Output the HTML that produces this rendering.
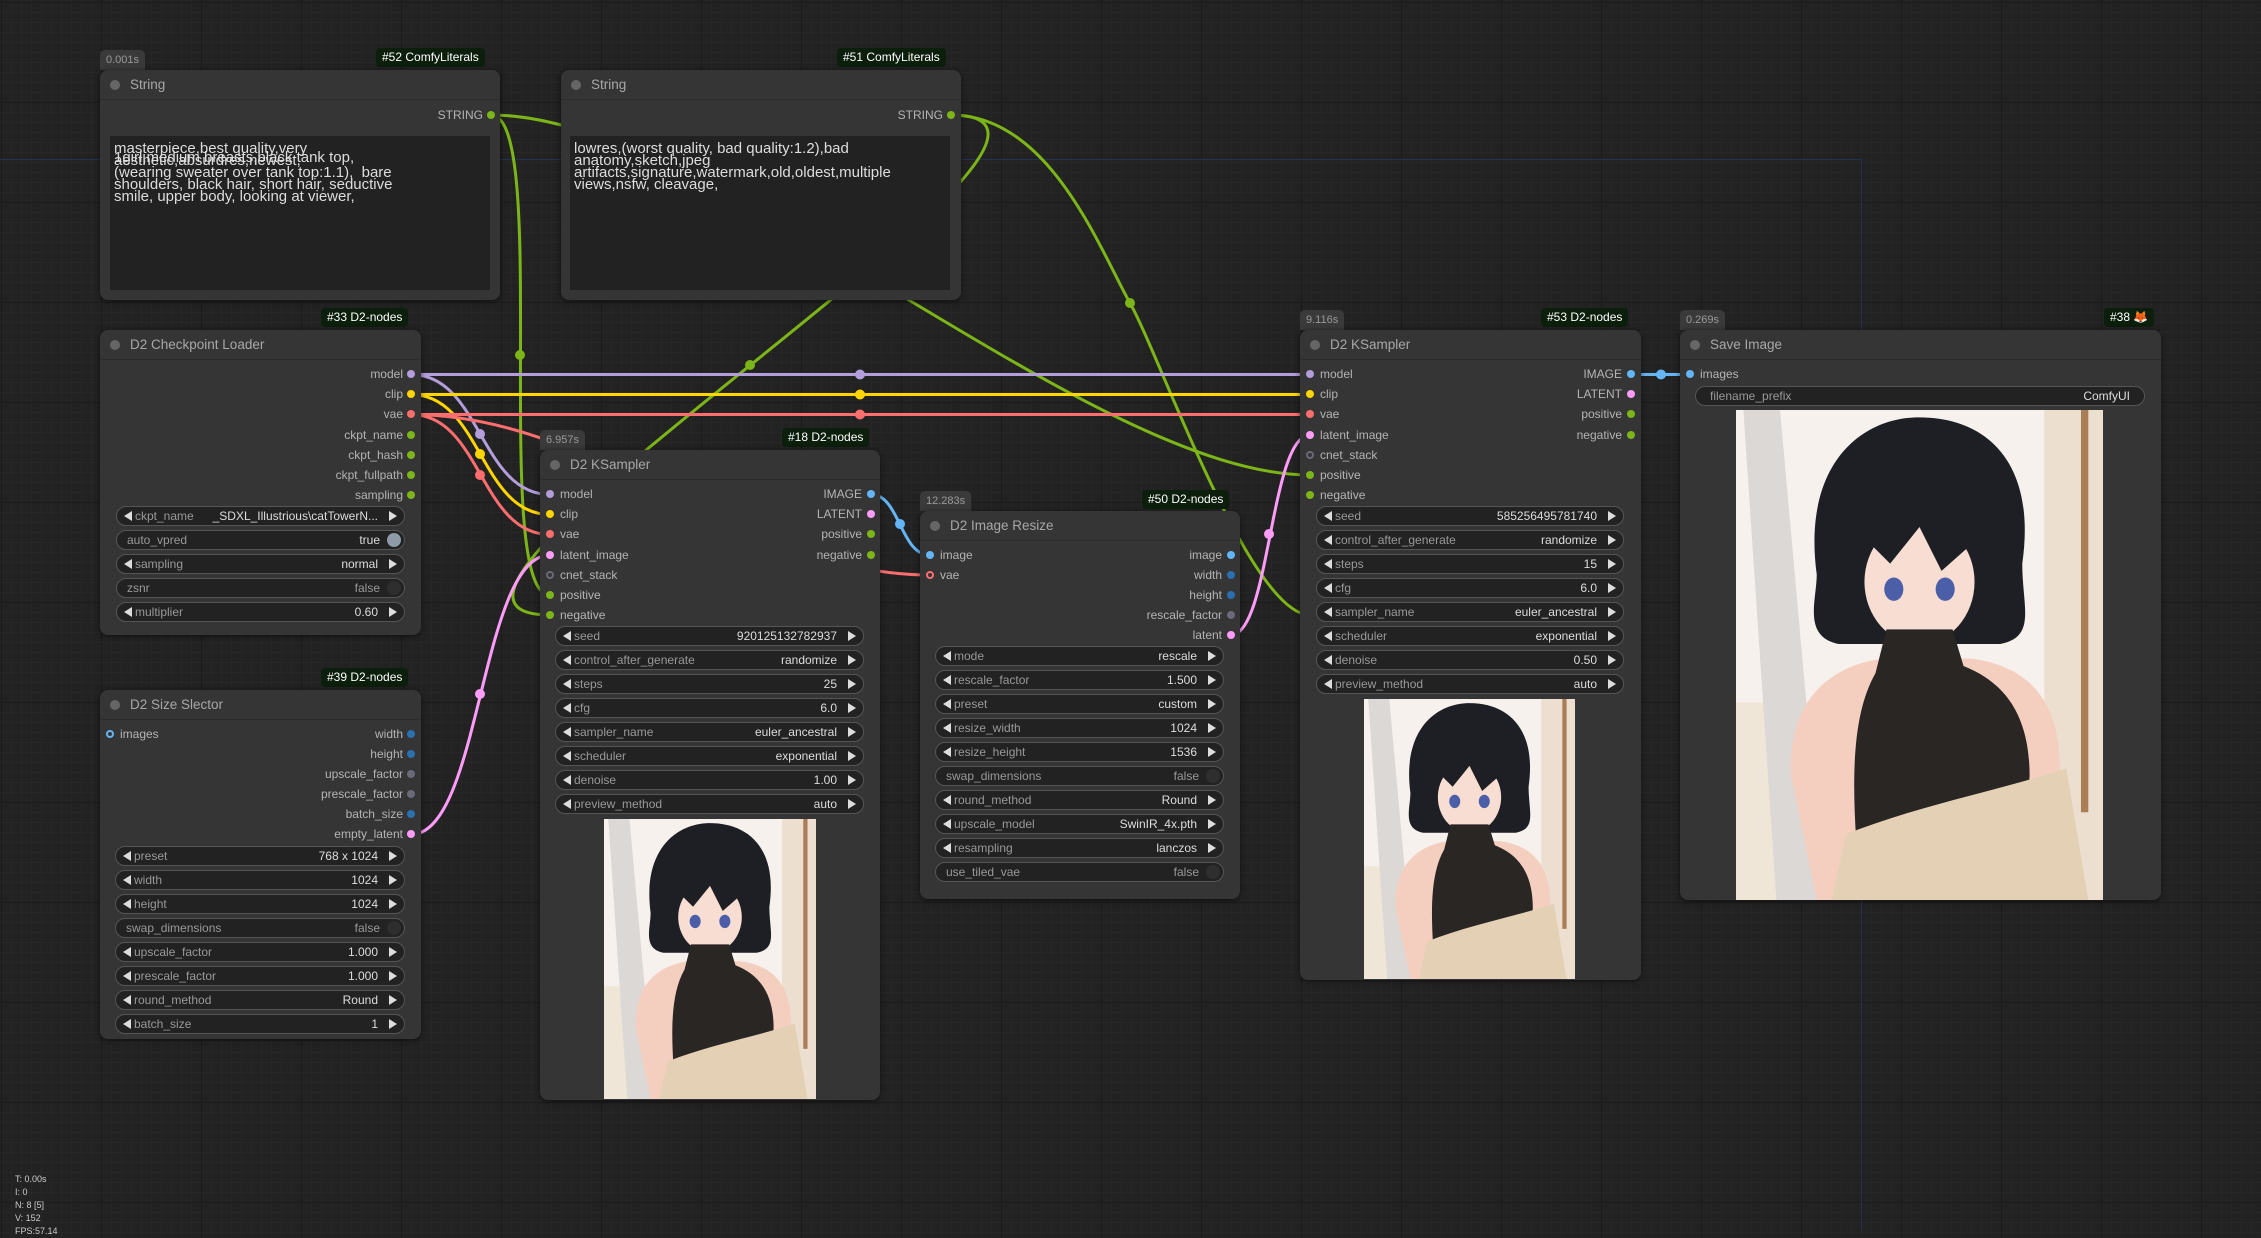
<!DOCTYPE html>
<html><head><meta charset="utf-8"><style>
*{box-sizing:border-box;margin:0;padding:0}
body{width:2261px;height:1230px;overflow:hidden;position:relative;font-family:"Liberation Sans",sans-serif;
background-color:#222;
background-image:linear-gradient(#1b1b1b 1px,transparent 1px),linear-gradient(90deg,#1b1b1b 1px,transparent 1px),linear-gradient(#272727 1px,transparent 1px),linear-gradient(90deg,#272727 1px,transparent 1px);
background-size:100px 100px,100px 100px,10px 10px,10px 10px;background-position:1px 2px,1px 2px,1px 2px,1px 2px}
.n{position:absolute;background:#353535;border-radius:8px;box-shadow:0 1px 6px rgba(0,0,0,.6)}
.t{height:30px;border-bottom:1px solid #2c2c2c;color:#a8a8a8;font-size:13.5px;line-height:30px;padding-left:30px;position:relative}
.t::before{content:"";position:absolute;left:10px;top:10px;width:10px;height:10px;border-radius:50%;background:#666}
.d{position:absolute;width:8px;height:8px;border-radius:50%}
.h{position:absolute;width:8px;height:8px;border-radius:50%;border:2px solid}
.l{position:absolute;font-size:12px;line-height:14px;color:#b4b4b4;white-space:nowrap}
.w{position:absolute;height:20px;border:1px solid #555;background:#222;border-radius:10px;font-size:12px;line-height:18px;color:#999;white-space:nowrap}
.w .k{position:absolute;left:18px}
.w b{position:absolute;right:26px;font-weight:normal;color:#ddd}
.w .la{position:absolute;left:7px;top:4px;width:0;height:0;border-top:5px solid transparent;border-bottom:5px solid transparent;border-right:8px solid #ddd}
.w .ra{position:absolute;right:7px;top:4px;width:0;height:0;border-top:5px solid transparent;border-bottom:5px solid transparent;border-left:8px solid #ddd}
.w.tg .k{left:10px}
.w.tg b{right:24px;color:#999}
.w .kn{position:absolute;right:3px;top:2px;width:14px;height:14px;border-radius:50%;background:#2e2e2e}
.lb{position:absolute;height:19px;background:#0c1e0c;color:#fff;font-size:12px;line-height:19px;padding:0 6px;border-radius:4px;white-space:nowrap}
.bd{position:absolute;height:20px;background:#3a3a3a;color:#999;font-size:11px;line-height:20px;padding:0 6px;border-radius:5px 5px 0 0}
.ta{position:absolute;background:#222;color:#ddd;font-size:15px;line-height:12px;padding:7px 4px;overflow:hidden;white-space:nowrap}
.st{position:absolute;left:15px;color:#ccc;font-size:9px;line-height:13px}
svg.img{position:absolute}
</style></head><body>

<div style="position:absolute;left:0;top:159px;width:1862px;height:1px;background:#243252"></div>
<div style="position:absolute;left:1861px;top:159px;width:1px;height:1071px;background:#243252"></div>

<svg width="0" height="0" style="position:absolute">
<defs>
<symbol id="girl" viewBox="0 0 100 134" preserveAspectRatio="none">
<rect width="100" height="134" fill="#f6f1ec"/>
<rect x="0" y="80" width="40" height="54" fill="#f0e6d8"/>
<polygon points="2,0 12,0 24,134 11,134" fill="#dcd8d5"/>
<rect x="84" y="0" width="16" height="134" fill="#ecdfcf"/>
<rect x="94" y="0" width="2" height="110" fill="#a97d55"/>
<path d="M22,45 C18,15 34,2 50,2 C68,2 82,14 78,42 C78,54 82,62 72,64 L28,64 C18,62 22,52 22,45Z" fill="#1d1f24"/>
<ellipse cx="50" cy="47" rx="15" ry="17" fill="#f7ddd2"/>
<path d="M30,42 C30,22 40,14 52,14 C66,14 71,24 71,42 L65,36 L56,44 L50,32 L42,42 L36,36Z" fill="#1d1f24"/>
<ellipse cx="43" cy="49" rx="2.6" ry="3.2" fill="#4a5fa8"/>
<ellipse cx="57" cy="49" rx="2.6" ry="3.2" fill="#4a5fa8"/>
<path d="M15,100 C14,80 25,70 40,68 L64,68 C80,70 90,80 88,104 L84,134 L22,134Z" fill="#f4cfbf"/>
<path d="M41,60 L59,60 L62,70 C72,74 80,82 80,100 L78,134 L34,134 C32,110 30,86 38,72Z" fill="#2a2624"/>
<path d="M30,116 C50,108 72,104 90,98 L96,134 L26,134Z" fill="#e4d1b5"/>
</symbol>
</defs>
</svg>

<svg width="2261" height="1230" style="position:absolute;left:0;top:0" fill="none" stroke-width="3">
<g stroke="#7cb518">
<path d="M491,115 C551,115 490,595 550,595"/>
<path d="M491,115 C711,115 1090,475 1310,475"/>
<path d="M951,115 C1171,115 330,615 550,615"/>
<path d="M951,115 C1050,115 1100,250 1130,303 S1250,615 1310,615"/>
</g>
<path stroke="#b39ddb" d="M411,374.5 L1310,374.5 M411,374.5 C481,374.5 480,494.5 550,494.5"/>
<path stroke="#ffd500" d="M411,394.5 L1310,394.5 M411,394.5 C481,394.5 480,514.5 550,514.5"/>
<path stroke="#ff6e6e" d="M411,414.5 L1310,414.5 M411,414.5 C481,414.5 480,534.5 550,534.5 M411,414.5 C600,414.5 740,575 930,575"/>
<path stroke="#64b5f6" d="M871,494.5 C900,494.5 900,555 930,555 M1631,374.5 L1690,374.5"/>
<path stroke="#ff9cf9" d="M1231,635 C1270,635 1270,435 1310,435 M411,834.5 C481,834.5 480,555 550,555"/>
<g>
<circle cx="520" cy="355" r="5" fill="#7cb518"/><circle cx="750" cy="365" r="5" fill="#7cb518"/><circle cx="1130" cy="303" r="5" fill="#7cb518"/>
<circle cx="860" cy="374.5" r="5" fill="#b39ddb"/><circle cx="480" cy="434" r="5" fill="#b39ddb"/>
<circle cx="860" cy="394.5" r="5" fill="#ffd500"/><circle cx="480" cy="454" r="5" fill="#ffd500"/>
<circle cx="860" cy="414.5" r="5" fill="#ff6e6e"/><circle cx="480" cy="475" r="5" fill="#ff6e6e"/>
<circle cx="900" cy="524" r="5" fill="#64b5f6"/><circle cx="1661" cy="374.5" r="5" fill="#64b5f6"/>
<circle cx="1269" cy="534" r="5" fill="#ff9cf9"/><circle cx="480" cy="694" r="5" fill="#ff9cf9"/>
</g>
</svg>

<div class="bd" style="left:100px;top:50px">0.001s</div>
<div class="lb" style="left:376px;top:48px">#52 ComfyLiterals</div>
<div class="n" style="left:100px;top:70px;width:400px;height:230px"><div class="t">String</div></div>
<div class="l" style="right:1778px;top:108px">STRING</div><div class="d" style="left:487px;top:111px;background:#7cb518"></div>
<div class="ta" style="left:110px;top:136px;width:380px;height:154px">masterpiece,best quality,very<br><span style="position:relative">aesthetic,absurdres,newest,<span style="position:absolute;left:0;top:0">1girl,medium breasts,black tank top,</span></span><br>(wearing sweater over tank top:1.1),&nbsp; bare<br>shoulders, black hair, short hair, seductive<br>smile, upper body, looking at viewer,</div>

<div class="lb" style="left:837px;top:48px">#51 ComfyLiterals</div>
<div class="n" style="left:561px;top:70px;width:400px;height:230px"><div class="t">String</div></div>
<div class="l" style="right:1318px;top:108px">STRING</div><div class="d" style="left:947px;top:111px;background:#7cb518"></div>
<div class="ta" style="left:570px;top:136px;width:380px;height:154px">lowres,(worst quality, bad quality:1.2),bad<br>anatomy,sketch,jpeg<br>artifacts,signature,watermark,old,oldest,multiple<br>views,nsfw, cleavage,</div>

<div class="lb" style="left:321px;top:308px">#33 D2-nodes</div>
<div class="n" style="left:100px;top:330px;width:321px;height:305px"><div class="t">D2 Checkpoint Loader</div></div>
<div class="l" style="right:1858px;top:367px">model</div><div class="d" style="left:407px;top:370px;background:#b39ddb"></div>
<div class="l" style="right:1858px;top:387px">clip</div><div class="d" style="left:407px;top:390px;background:#ffd500"></div>
<div class="l" style="right:1858px;top:407px">vae</div><div class="d" style="left:407px;top:410px;background:#ff6e6e"></div>
<div class="l" style="right:1858px;top:428px">ckpt_name</div><div class="d" style="left:407px;top:431px;background:#7cb518"></div>
<div class="l" style="right:1858px;top:448px">ckpt_hash</div><div class="d" style="left:407px;top:451px;background:#7cb518"></div>
<div class="l" style="right:1858px;top:468px">ckpt_fullpath</div><div class="d" style="left:407px;top:471px;background:#7cb518"></div>
<div class="l" style="right:1858px;top:488px">sampling</div><div class="d" style="left:407px;top:491px;background:#7cb518"></div>
<div class="w" style="left:116px;top:506px;width:289px"><i class="la"></i><span class="k">ckpt_name</span><b>_SDXL_Illustrious\catTowerN...</b><i class="ra"></i></div>
<div class="w tg" style="left:116px;top:530px;width:289px"><span class="k">auto_vpred</span><b style="color:#ddd">true</b><i class="kn" style="background:#8e9aa6"></i></div>
<div class="w" style="left:116px;top:554px;width:289px"><i class="la"></i><span class="k">sampling</span><b>normal</b><i class="ra"></i></div>
<div class="w tg" style="left:116px;top:578px;width:289px"><span class="k">zsnr</span><b>false</b><i class="kn"></i></div>
<div class="w" style="left:116px;top:602px;width:289px"><i class="la"></i><span class="k">multiplier</span><b>0.60</b><i class="ra"></i></div>

<div class="lb" style="left:321px;top:668px">#39 D2-nodes</div>
<div class="n" style="left:100px;top:690px;width:321px;height:349px"><div class="t">D2 Size Slector</div></div>
<div class="h" style="left:106px;top:730px;border-color:#64b5f6"></div><div class="l" style="left:120px;top:727px">images</div>
<div class="l" style="right:1858px;top:727px">width</div><div class="d" style="left:407px;top:730px;background:#2a6fb0"></div>
<div class="l" style="right:1858px;top:747px">height</div><div class="d" style="left:407px;top:750px;background:#2a6fb0"></div>
<div class="l" style="right:1858px;top:767px">upscale_factor</div><div class="d" style="left:407px;top:770px;background:#6a6a78"></div>
<div class="l" style="right:1858px;top:787px">prescale_factor</div><div class="d" style="left:407px;top:790px;background:#6a6a78"></div>
<div class="l" style="right:1858px;top:807px">batch_size</div><div class="d" style="left:407px;top:810px;background:#2a6fb0"></div>
<div class="l" style="right:1858px;top:827px">empty_latent</div><div class="d" style="left:407px;top:830px;background:#ff9cf9"></div>
<div class="w" style="left:115px;top:846px;width:290px"><i class="la"></i><span class="k">preset</span><b>768 x 1024</b><i class="ra"></i></div>
<div class="w" style="left:115px;top:870px;width:290px"><i class="la"></i><span class="k">width</span><b>1024</b><i class="ra"></i></div>
<div class="w" style="left:115px;top:894px;width:290px"><i class="la"></i><span class="k">height</span><b>1024</b><i class="ra"></i></div>
<div class="w tg" style="left:115px;top:918px;width:290px"><span class="k">swap_dimensions</span><b>false</b><i class="kn"></i></div>
<div class="w" style="left:115px;top:942px;width:290px"><i class="la"></i><span class="k">upscale_factor</span><b>1.000</b><i class="ra"></i></div>
<div class="w" style="left:115px;top:966px;width:290px"><i class="la"></i><span class="k">prescale_factor</span><b>1.000</b><i class="ra"></i></div>
<div class="w" style="left:115px;top:990px;width:290px"><i class="la"></i><span class="k">round_method</span><b>Round</b><i class="ra"></i></div>
<div class="w" style="left:115px;top:1014px;width:290px"><i class="la"></i><span class="k">batch_size</span><b>1</b><i class="ra"></i></div>

<div class="bd" style="left:540px;top:430px">6.957s</div>
<div class="lb" style="left:782px;top:428px">#18 D2-nodes</div>
<div class="n" style="left:540px;top:450px;width:340px;height:650px"><div class="t">D2 KSampler</div></div>
<div class="d" style="left:546px;top:490px;background:#b39ddb"></div><div class="l" style="left:560px;top:487px">model</div>
<div class="d" style="left:546px;top:510px;background:#ffd500"></div><div class="l" style="left:560px;top:507px">clip</div>
<div class="d" style="left:546px;top:530px;background:#ff6e6e"></div><div class="l" style="left:560px;top:527px">vae</div>
<div class="d" style="left:546px;top:551px;background:#ff9cf9"></div><div class="l" style="left:560px;top:548px">latent_image</div>
<div class="h" style="left:546px;top:571px;border-color:#6a6a78"></div><div class="l" style="left:560px;top:568px">cnet_stack</div>
<div class="d" style="left:546px;top:591px;background:#7cb518"></div><div class="l" style="left:560px;top:588px">positive</div>
<div class="d" style="left:546px;top:611px;background:#7cb518"></div><div class="l" style="left:560px;top:608px">negative</div>
<div class="l" style="right:1399px;top:487px">IMAGE</div><div class="d" style="left:867px;top:490px;background:#64b5f6"></div>
<div class="l" style="right:1399px;top:507px">LATENT</div><div class="d" style="left:867px;top:510px;background:#ff9cf9"></div>
<div class="l" style="right:1399px;top:527px">positive</div><div class="d" style="left:867px;top:530px;background:#7cb518"></div>
<div class="l" style="right:1399px;top:548px">negative</div><div class="d" style="left:867px;top:551px;background:#7cb518"></div>
<div class="w" style="left:555px;top:626px;width:309px"><i class="la"></i><span class="k">seed</span><b>920125132782937</b><i class="ra"></i></div>
<div class="w" style="left:555px;top:650px;width:309px"><i class="la"></i><span class="k">control_after_generate</span><b>randomize</b><i class="ra"></i></div>
<div class="w" style="left:555px;top:674px;width:309px"><i class="la"></i><span class="k">steps</span><b>25</b><i class="ra"></i></div>
<div class="w" style="left:555px;top:698px;width:309px"><i class="la"></i><span class="k">cfg</span><b>6.0</b><i class="ra"></i></div>
<div class="w" style="left:555px;top:722px;width:309px"><i class="la"></i><span class="k">sampler_name</span><b>euler_ancestral</b><i class="ra"></i></div>
<div class="w" style="left:555px;top:746px;width:309px"><i class="la"></i><span class="k">scheduler</span><b>exponential</b><i class="ra"></i></div>
<div class="w" style="left:555px;top:770px;width:309px"><i class="la"></i><span class="k">denoise</span><b>1.00</b><i class="ra"></i></div>
<div class="w" style="left:555px;top:794px;width:309px"><i class="la"></i><span class="k">preview_method</span><b>auto</b><i class="ra"></i></div>
<svg class="img" style="left:604px;top:819px" width="212" height="280"><use href="#girl" width="212" height="280"/></svg>

<div class="bd" style="left:920px;top:491px">12.283s</div>
<div class="lb" style="left:1142px;top:490px">#50 D2-nodes</div>
<div class="n" style="left:920px;top:511px;width:320px;height:388px"><div class="t">D2 Image Resize</div></div>
<div class="d" style="left:926px;top:551px;background:#64b5f6"></div><div class="l" style="left:940px;top:548px">image</div>
<div class="h" style="left:926px;top:571px;border-color:#ff6e6e"></div><div class="l" style="left:940px;top:568px">vae</div>
<div class="l" style="right:1039px;top:548px">image</div><div class="d" style="left:1227px;top:551px;background:#64b5f6"></div>
<div class="l" style="right:1039px;top:568px">width</div><div class="d" style="left:1227px;top:571px;background:#2a6fb0"></div>
<div class="l" style="right:1039px;top:588px">height</div><div class="d" style="left:1227px;top:591px;background:#2a6fb0"></div>
<div class="l" style="right:1039px;top:608px">rescale_factor</div><div class="d" style="left:1227px;top:611px;background:#6a6a78"></div>
<div class="l" style="right:1039px;top:628px">latent</div><div class="d" style="left:1227px;top:631px;background:#ff9cf9"></div>
<div class="w" style="left:935px;top:646px;width:289px"><i class="la"></i><span class="k">mode</span><b>rescale</b><i class="ra"></i></div>
<div class="w" style="left:935px;top:670px;width:289px"><i class="la"></i><span class="k">rescale_factor</span><b>1.500</b><i class="ra"></i></div>
<div class="w" style="left:935px;top:694px;width:289px"><i class="la"></i><span class="k">preset</span><b>custom</b><i class="ra"></i></div>
<div class="w" style="left:935px;top:718px;width:289px"><i class="la"></i><span class="k">resize_width</span><b>1024</b><i class="ra"></i></div>
<div class="w" style="left:935px;top:742px;width:289px"><i class="la"></i><span class="k">resize_height</span><b>1536</b><i class="ra"></i></div>
<div class="w tg" style="left:935px;top:766px;width:289px"><span class="k">swap_dimensions</span><b>false</b><i class="kn"></i></div>
<div class="w" style="left:935px;top:790px;width:289px"><i class="la"></i><span class="k">round_method</span><b>Round</b><i class="ra"></i></div>
<div class="w" style="left:935px;top:814px;width:289px"><i class="la"></i><span class="k">upscale_model</span><b>SwinIR_4x.pth</b><i class="ra"></i></div>
<div class="w" style="left:935px;top:838px;width:289px"><i class="la"></i><span class="k">resampling</span><b>lanczos</b><i class="ra"></i></div>
<div class="w tg" style="left:935px;top:862px;width:289px"><span class="k">use_tiled_vae</span><b>false</b><i class="kn"></i></div>

<div class="bd" style="left:1300px;top:310px">9.116s</div>
<div class="lb" style="left:1541px;top:308px">#53 D2-nodes</div>
<div class="n" style="left:1300px;top:330px;width:341px;height:650px"><div class="t">D2 KSampler</div></div>
<div class="d" style="left:1306px;top:370px;background:#b39ddb"></div><div class="l" style="left:1320px;top:367px">model</div>
<div class="d" style="left:1306px;top:390px;background:#ffd500"></div><div class="l" style="left:1320px;top:387px">clip</div>
<div class="d" style="left:1306px;top:410px;background:#ff6e6e"></div><div class="l" style="left:1320px;top:407px">vae</div>
<div class="d" style="left:1306px;top:431px;background:#ff9cf9"></div><div class="l" style="left:1320px;top:428px">latent_image</div>
<div class="h" style="left:1306px;top:451px;border-color:#6a6a78"></div><div class="l" style="left:1320px;top:448px">cnet_stack</div>
<div class="d" style="left:1306px;top:471px;background:#7cb518"></div><div class="l" style="left:1320px;top:468px">positive</div>
<div class="d" style="left:1306px;top:491px;background:#7cb518"></div><div class="l" style="left:1320px;top:488px">negative</div>
<div class="l" style="right:639px;top:367px">IMAGE</div><div class="d" style="left:1627px;top:370px;background:#64b5f6"></div>
<div class="l" style="right:639px;top:387px">LATENT</div><div class="d" style="left:1627px;top:390px;background:#ff9cf9"></div>
<div class="l" style="right:639px;top:407px">positive</div><div class="d" style="left:1627px;top:410px;background:#7cb518"></div>
<div class="l" style="right:639px;top:428px">negative</div><div class="d" style="left:1627px;top:431px;background:#7cb518"></div>
<div class="w" style="left:1316px;top:506px;width:308px"><i class="la"></i><span class="k">seed</span><b>585256495781740</b><i class="ra"></i></div>
<div class="w" style="left:1316px;top:530px;width:308px"><i class="la"></i><span class="k">control_after_generate</span><b>randomize</b><i class="ra"></i></div>
<div class="w" style="left:1316px;top:554px;width:308px"><i class="la"></i><span class="k">steps</span><b>15</b><i class="ra"></i></div>
<div class="w" style="left:1316px;top:578px;width:308px"><i class="la"></i><span class="k">cfg</span><b>6.0</b><i class="ra"></i></div>
<div class="w" style="left:1316px;top:602px;width:308px"><i class="la"></i><span class="k">sampler_name</span><b>euler_ancestral</b><i class="ra"></i></div>
<div class="w" style="left:1316px;top:626px;width:308px"><i class="la"></i><span class="k">scheduler</span><b>exponential</b><i class="ra"></i></div>
<div class="w" style="left:1316px;top:650px;width:308px"><i class="la"></i><span class="k">denoise</span><b>0.50</b><i class="ra"></i></div>
<div class="w" style="left:1316px;top:674px;width:308px"><i class="la"></i><span class="k">preview_method</span><b>auto</b><i class="ra"></i></div>
<svg class="img" style="left:1364px;top:699px" width="211" height="280"><use href="#girl" width="211" height="280"/></svg>

<div class="bd" style="left:1680px;top:310px">0.269s</div>
<div class="lb" style="left:2104px;top:308px">#38 🦊</div>
<div class="n" style="left:1680px;top:330px;width:481px;height:570px"><div class="t">Save Image</div></div>
<div class="d" style="left:1686px;top:370px;background:#64b5f6"></div><div class="l" style="left:1700px;top:367px">images</div>
<div class="w" style="left:1695px;top:386px;width:450px"><span class="k" style="left:14px">filename_prefix</span><b style="right:14px">ComfyUI</b></div>
<svg class="img" style="left:1736px;top:410px" width="367" height="490"><use href="#girl" width="367" height="490"/></svg>

<div class="st" style="top:1173px">T: 0.00s<br>I: 0<br>N: 8 [5]<br>V: 152<br>FPS:57.14</div>
</body></html>
